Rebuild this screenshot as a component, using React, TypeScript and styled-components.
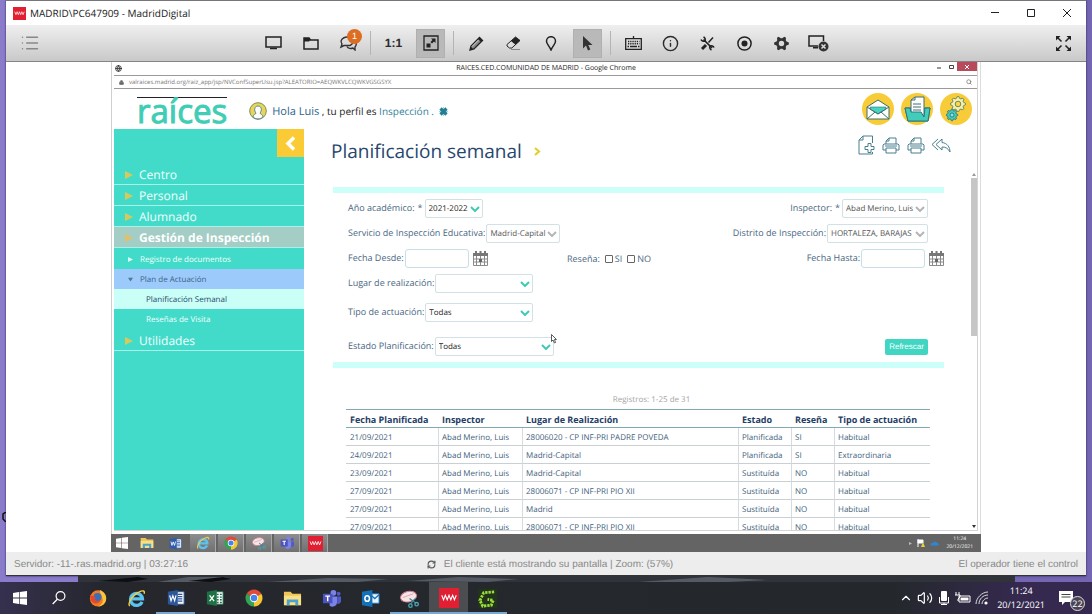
import React from "react";
import styled, { createGlobalStyle, css } from "styled-components";
import {
  Info, List, Lock, Globe, Search, RefreshCw, ChevronUp, Volume2,
} from "lucide-react";

const UI = `"Open Sans", "Noto Sans", sans-serif`;
const ARIAL = `"Liberation Sans", Arial, sans-serif`;

const Global = createGlobalStyle`
  * { box-sizing: border-box; }
  html, body, #root { height: 100%; }
  body { margin: 0; font-family: ${UI}; overflow: hidden; text-rendering: geometricPrecision; }
  button, select, input { text-rendering: inherit; }
  button { font-family: inherit; padding: 0; border: 0; background: none; color: inherit; }
  svg { display: block; flex: none; }
  a { color: inherit; text-decoration: none; }
`;

/* ---------- desktop ---------- */
const Desktop = styled.div`
  display: flex; flex-direction: column; height: 100%; position: relative;
  background: linear-gradient(90deg, #8a7ccb 0 78px, #3a3d43 78px calc(100% - 77px), #7566b3 calc(100% - 77px));
`;
const AppWindow = styled.div`
  flex: 1; min-height: 0; margin: 0 6px; display: flex; flex-direction: column;
  background: #fff; border-top: 1px solid #77747c; border-bottom: 1px solid #333;
  box-shadow: 0 0 2px #2a2150;
`;
const Wallpaper = styled.svg` width: calc(100% - 155px); height: 6px; margin-left: 78px; `;
const EdgeCursor = styled.svg` position: absolute; left: 2px; bottom: 92px; `;

const TitleBar = styled.header`
  display: flex; align-items: center; height: 24px; padding: 0 1px 0 7px;
  font-size: 10px; color: #222;
`;
const TitleText = styled.span` flex: 1; margin-left: 4px; line-height: 14px; padding-bottom: 1px; `;
const WinButton = styled.button`
  width: 36px; height: 24px; display: grid; place-items: center;
`;

const Toolbar = styled.div`
  display: grid; grid-template-columns: 1fr auto 1fr; align-items: center;
  height: 37px; padding: 0 14px; border-bottom: 1px solid #858585;
  background: linear-gradient(#efefef, #c9c9c9); color: #2b2b2b;
`;
const ToolGroup = styled.div` display: flex; align-items: center; gap: 8px; `;
const ToolButton = styled.button<{ $on?: boolean }>`
  position: relative; width: 29px; height: 29px; display: grid; place-items: center;
  font: bold 12px ${ARIAL};
  ${(p) => p.$on && css`background: #b9b9b9; box-shadow: inset 0 0 0 1px #b0b0b0;`}
`;
const ToolDivider = styled.span` width: 1px; height: 24px; background: #b4b4b4; `;
const ToolBadge = styled.span`
  position: absolute; right: 0; top: 0; width: 15px; height: 15px; border-radius: 50%;
  background: #dd6d22; color: #fff; font: 9px/15px ${ARIAL}; text-align: center;
`;
const PlainIcon = styled.button` width: 16px; height: 20px; display: grid; place-items: center; color: #888; `;
const EndIcon = styled(PlainIcon)` justify-self: end; color: #222; margin-right: 1px; `;

const StatusBar = styled.footer`
  display: grid; grid-template-columns: 1fr auto 1fr; align-items: center; height: 23px;
  padding: 1px 8px 0; background: #ededed; color: #888; font: 10px ${ARIAL};
`;
const StatusMid = styled.span` display: flex; align-items: center; gap: 8px; padding-left: 8px; `;
const StatusEnd = styled.span` text-align: right; `;

/* ---------- remote desktop ---------- */
const RemoteStage = styled.div` flex: 1; min-height: 0; display: flex; padding: 0 105px; `;
const Remote = styled.div`
  flex: 1; min-width: 0; display: flex; flex-direction: column; background: #fff;
  border-left: 1px solid #cfcfcf; border-right: 1px solid #dcdcdc;
`;
const Browser = styled.div`
  flex: 1; min-height: 0; display: flex; flex-direction: column; margin: 0 2px 3px;
  border: solid #d4d4d4; border-width: 0 1px 1px 0;
`;
const BrowserTitle = styled.div`
  display: grid; grid-template-columns: 1fr auto 1fr; height: 14px; padding-left: 1px;
  border-bottom: 1px solid #9a9a9a; font-size: 7px; line-height: 13px; color: #222;
`;
const BrowserIcon = styled.span` display: flex; align-items: center; height: 13px; color: #333; `;
const BrowserControls = styled.span` display: flex; justify-content: flex-end; `;
const MiniButton = styled.button<{ $close?: boolean }>`
  width: ${(p) => (p.$close ? 20 : 12)}px; height: 9px; display: grid; place-items: center;
  ${(p) => p.$close && css`background: #b94a5c;`}
`;
const AddressBar = styled.div`
  display: flex; align-items: center; gap: 5px; height: 13px; padding: 0 5px;
  border-bottom: 1px solid #9a9a9a; font-size: 6px; color: #777;
`;
const Url = styled.span` flex: 1; line-height: 10px; `;

const PageHeader = styled.div`
  display: flex; align-items: center; height: 40px; padding: 0 5px 0 23px;
`;
const Logo = styled.a`
  height: 25px; border-top: 1px solid #222;
  font: 33px/25px ${UI}; color: #41cdb5; -webkit-text-stroke: 1px #41cdb5;
`;
const UserInfo = styled.div`
  flex: 1; display: flex; align-items: center; gap: 5px; margin: 4px 0 0 22px;
  font-size: 10px; color: #222;
`;
const UserText = styled.span` white-space: pre; `;
const UserName = styled.a` font-size: 11px; color: #2a648e; `;
const Profile = styled.a` color: #2f7f9d; `;
const RoundNav = styled.nav` display: flex; gap: 7px; `;
const RoundButton = styled.button`
  width: 32px; height: 32px; border-radius: 50%; background: #f8cc38;
  display: grid; place-items: center;
`;

const Columns = styled.div` flex: 1; min-height: 0; display: flex; overflow: hidden; `;
const Sidebar = styled.nav` width: 190px; flex: none; background: #42dbc9; color: #f2fffd; `;
const SideTop = styled.div` height: 35px; display: flex; justify-content: flex-end; `;
const Collapse = styled.button`
  width: 27px; height: 28px; background: #fbcb35; display: grid; place-items: center;
`;
const MenuItem = styled.a<{ $active?: boolean }>`
  display: flex; align-items: center; gap: 6px; height: 21px; padding: 1px 0 0 11px;
  border-bottom: 1px solid #a6f3e9; font-size: 12px; line-height: 18px;
  ${(p) => p.$active && css`background: #a3cdc5; font-weight: bold; color: #fff;`}
`;
const SubMenu = styled.div` padding: 1px 0; `;
const SubItem = styled.a<{ $tone?: "open" | "current"; $deep?: boolean }>`
  display: flex; align-items: center; gap: 7px; height: 20px; font-size: 8px;
  padding-left: ${(p) => (p.$deep ? 32 : 14)}px;
  ${(p) => p.$tone === "open" && css`background: #9ccbfb; color: #3c6288;`}
  ${(p) => p.$tone === "current" && css`background: #cafff8; color: #1f4a66;`}
`;

const Main = styled.main` flex: 1; min-width: 0; display: flex; flex-direction: column; `;
const Heading = styled.div`
  display: flex; align-items: center; height: 42px; padding: 0 26px 0 27px;
`;
const PageTitle = styled.h1`
  flex: 1; display: flex; align-items: center; gap: 12px; margin: 2px 0 0;
  font-size: 19px; line-height: 24px; font-weight: 400; color: #27466d;
`;
const Actions = styled.div` display: flex; gap: 5px; margin-top: -10px; color: #4a7f90; `;
const ActionButton = styled.button` width: 20px; height: 22px; display: grid; place-items: center; `;
const ScrollArea = styled.div` flex: 1; min-height: 0; display: flex; `;
const Content = styled.div` flex: 1; min-width: 0; overflow: hidden; padding: 16px 26px 0 29px; `;
const Scrollbar = styled.div`
  width: 7px; display: flex; flex-direction: column; align-items: center; justify-content: space-between;
  padding: 2px 0;
`;
const Thumb = styled.span` width: 6px; height: 158px; margin: 2px 0 auto; background: #c6c6c6; `;

const Filters = styled.form`
  position: relative; border: solid #cdfffa; border-width: 6px 0; padding: 3px 0 4px 15px; height: 181px;
  color: #4a6883; font-size: 9px;
`;
const FilterRow = styled.div<{ $h: number; $flush?: boolean }>`
  display: grid; grid-template-columns: 219px 1fr auto; align-items: center;
  height: ${(p) => p.$h}px; padding-right: ${(p) => (p.$flush ? 0 : 16)}px;
`;
const Field = styled.div` display: flex; align-items: center; gap: 1px; white-space: nowrap; `;
const Label = styled.label<{ $req?: boolean }>`
  padding-bottom: 2px;
  ${(p) => p.$req && css`&::after { content: "*"; margin: 0 1px 0 3px; }`}
`;
const SelectBox = styled.span<{ $w: number; $muted?: boolean }>`
  position: relative; display: block; width: ${(p) => p.$w}px; height: 19px;
  color: ${(p) => (p.$muted ? "#b5b5b5" : "#3fcab4")};
  select {
    appearance: none; width: 100%; height: 100%; padding: 0 3px; border: 1px solid #d2e2e4;
    border-radius: 2px; background: #fff; font: 8px ${UI};
    color: ${(p) => (p.$muted ? "#555" : "#222")};
  }
  svg { position: absolute; right: 3px; top: 7px; pointer-events: none; }
`;
const DateInput = styled.input`
  width: 64px; height: 19px; margin-right: 3px; border: 1px solid #c5e0e6; border-radius: 3px;
  background: #fff; font: 8px ${UI};
`;
const Check = styled.input`
  appearance: none; width: 8px; height: 8px; margin: 0 1px 0 4px; border: 1px solid #666; border-radius: 1px; background: #fff;
`;
const Refresh = styled.button`
  width: 43px; height: 16px; border-radius: 2px; background: #40d6c2; color: #fff; font: 8px ${ARIAL};
`;
const MouseCursor = styled.svg` position: absolute; left: 218px; top: 141px; `;

const Results = styled.section` padding: 26px 14px 0 13px; `;
const Count = styled.p` margin: 0 0 3px; padding-left: 27px; font-size: 8px; line-height: 12px; text-align: center; color: #a5a5a5; `;
const Table = styled.table`
  width: 100%; table-layout: fixed; border-collapse: separate; border-spacing: 0; text-align: left;
  font-size: 8px; line-height: 14px; color: #3f5f7c; white-space: nowrap;
  th, td { padding: 2px 0 0 4px; }
  th { height: 19px; border: solid #82a9b0; border-width: 1px 0; color: #1f3d66; font-size: 9px; }
  td { height: 18px; border-bottom: 1px solid #c8d0d4; }
  td + td { border-left: 1px solid #d5dcdf; padding-left: 3px; }
`;
const Col = styled.col<{ $w?: number }>` width: ${(p) => (p.$w ? p.$w + "px" : "auto")}; `;

const RemoteTaskbar = styled.div`
  display: flex; align-items: center; gap: 2px; height: 18px; background: #646464; color: #fff; margin: 0 -1px;
`;
const RemoteTask = styled.button<{ $open?: boolean }>`
  width: 26px; height: 18px; display: grid; place-items: center;
  &:first-child { width: 21px; }
  ${(p) => p.$open && css`background: linear-gradient(#8d8d8d, #707070); box-shadow: inset -1px 0 #a5a5a5;`}
`;
const RemoteTray = styled.div` flex: 1; display: flex; justify-content: flex-end; align-items: center; gap: 5px; padding-right: 8px; `;
const RemoteClock = styled.time` margin-left: 2px; font-size: 5px; line-height: 8px; text-align: center; `;

/* ---------- host taskbar ---------- */
const Taskbar = styled.nav`
  display: flex; align-items: stretch; height: 32px; color: #fff;
  background: linear-gradient(90deg, #36304f 0, #25272d 100px, #24282c calc(100% - 200px), #35294f calc(100% - 70px), #36294f);
`;
const TaskButton = styled.button<{ $state?: "open" | "active" }>`
  width: 39px; height: 32px; display: grid; place-items: center;
  border: solid transparent; border-width: 2px 0;
  ${(p) => p.$state && css`border-bottom-color: #76a9d4;`}
  ${(p) => p.$state === "active" && css`background: #4b4d51;`}
`;
const Tray = styled.div` flex: 1; display: flex; justify-content: flex-end; align-items: center; gap: 4px; `;
const Clock = styled.time` margin: 0 9px 0 3px; font-size: 9px; line-height: 14px; text-align: center; `;
const Notice = styled.button` position: relative; width: 24px; height: 24px; margin-right: 10px; `;
const NoticeCount = styled.span`
  position: absolute; right: -3px; bottom: -1px; width: 15px; height: 15px; border-radius: 50%;
  border: 1px solid #ddd; background: #4a4455; font-size: 9px; line-height: 13px; text-align: center;
`;

/* ---------- drawings ---------- */
const S = ({ w, h = w, vb, children }: { w: number; h?: number; vb: string; children: React.ReactNode }) => (
  <svg width={w} height={h} viewBox={vb} aria-hidden="true" fill="none" stroke="none">{children}</svg>
);
const MadridLogo = ({ s }: { s: number }) => (
  <S w={s} vb="0 0 22 22">
    <rect width="22" height="22" fill="#e01f33" />
    <path d="M3 8l2 5 2-5 2 5 2-5 2 5 2-5 2 5 2-5" stroke="#fff" strokeWidth="1.2" />
  </S>
);
const WindowsIcon = ({ s }: { s: number }) => (
  <S w={s} vb="0 0 14 14"><path fill="#fff" d="M0 2l6-.9V6.600H0zM6.700 1L14 0v6.600H6.700zM0 7.400h6v5.500L0 12zM6.700 7.400H14V14l-7.300-1z" /></S>
);
const OfficeIcon = ({ s, c, k }: { s: number; c: string; k: "word" | "excel" }) => (
  <S w={s} vb="0 0 20 20">
    <path d="M10 3h9v14h-9z" fill="#f4f6fa" stroke={c} />
    {k === "word" ? <path d="M12 6h5M12 8.500h5M12 11h5M12 13.500h5" stroke={c} strokeWidth="1.200" />
      : <path d="M12 6h2M15.500 6h2M12 9h2M15.500 9h2M12 12h2M15.500 12h2M12 15h2M15.500 15h2" stroke={c} strokeWidth="1.600" />}
    <path d="M1 3l11-2v18L1 17z" fill={c} />
    {k === "word" ? <path d="M3 7l1.500 6L6.500 7.500 8.500 13 10 7" stroke="#fff" strokeWidth="1.300" />
      : <path d="M4 7l5 6.500M9 7l-5 6.500" stroke="#fff" strokeWidth="1.500" />}
  </S>
);
const IeIcon = ({ s }: { s: number }) => (
  <S w={s} vb="0 0 20 20">
    <path d="M15.800 13.500A6.300 6.300 0 1 1 16.300 10.500H5" stroke="#5cc3ee" strokeWidth="3.400" />
    <path d="M3 18C0 15 6 6 13 3c4-2 6-1 5 2" stroke="#f2cf45" strokeWidth="1.500" />
  </S>
);
const ChromeIcon = ({ s }: { s: number }) => (
  <S w={s} vb="0 0 20 20">
    <path d="M10 10L1.800 5.300A9.500 9.500 0 0 1 18.200 5.300z" fill="#e04a3a" />
    <path d="M10 10L18.200 5.300A9.500 9.500 0 0 1 10 19.500z" fill="#f6c733" />
    <path d="M10 10v9.500A9.500 9.500 0 0 1 1.800 5.300z" fill="#35a354" />
    <circle cx="10" cy="10" r="4.600" fill="#fff" /><circle cx="10" cy="10" r="3.600" fill="#4384ee" />
  </S>
);
const FirefoxIcon = () => (
  <S w={18} vb="0 0 20 20">
    <circle cx="10" cy="10.500" r="9" fill="#f37a24" />
    <path d="M12 1c5 2 8 6 7 11-1 5-5 7.500-9 7.500 4-2 6-5 5-9-.500-3-3-5-3-9.500z" fill="#fbc33c" />
    <circle cx="9.500" cy="9" r="4.500" fill="#3a6fb5" />
    <path d="M1 6c1 2 4 1 6 3 1 1 0 2-1 3 2 2 5 2 7 0-1 5-9 6-11 0z" fill="#e3472d" />
  </S>
);
const ExplorerIcon = ({ s }: { s: number }) => (
  <S w={s} vb="0 0 20 20">
    <path d="M1 3h7l2 2h9v12H1z" fill="#eec556" /><path d="M1 7h18v10H1z" fill="#f9df86" />
    <path d="M4 17v-6h12v6h-3v-3H7v3z" fill="#4aa3cf" />
  </S>
);
const TeamsIcon = ({ s }: { s: number }) => (
  <S w={s} vb="0 0 20 20">
    <circle cx="12" cy="4" r="3" fill="#7b83eb" /><circle cx="17.500" cy="5" r="2" fill="#5059c9" />
    <path d="M8 8h8v6a5 5 0 0 1-8 3.500z" fill="#7b83eb" /><path d="M16 8h4v5a3 3 0 0 1-4 2.500z" fill="#5059c9" />
    <path d="M1 5h10v10H1z" fill="#4b53bc" /><path d="M3.500 7.500h5M6 7.500v5.500" stroke="#fff" strokeWidth="1.500" />
  </S>
);
const OutlookIcon = () => (
  <S w={19} vb="0 0 20 20">
    <path d="M10 5h9v10h-9z" fill="#e9f3fb" stroke="#1473c0" /><path d="M10 6l4.500 4L19 6" stroke="#1473c0" strokeWidth="1.400" />
    <path d="M1 3l11-2v18L1 17z" fill="#1470b8" /><ellipse cx="6.500" cy="10" rx="2.400" ry="3" stroke="#fff" strokeWidth="1.600" />
  </S>
);
const SnipIcon = ({ s }: { s: number }) => (
  <S w={s} vb="0 0 20 20">
    <ellipse cx="9" cy="8" rx="8.500" ry="5.500" fill="#f6e3e6" stroke="#c9808c" transform="rotate(-12 9 8)" />
    <path d="M3 9l11-4" stroke="#dba4ae" /><path d="M10 10l7 5M16 10l-5 6" stroke="#3c8592" strokeWidth="1.200" />
    <circle cx="17.500" cy="16" r="1.800" stroke="#4aa6b5" strokeWidth="1.400" /><circle cx="11" cy="17.500" r="1.800" stroke="#4aa6b5" strokeWidth="1.400" />
  </S>
);
const CamtasiaIcon = () => (
  <S w={19} vb="0 0 20 20">
    <rect width="20" height="20" fill="#23341d" />
    <path d="M17 3L6 4 2 12l3 6 9-1 2-5-6-1" stroke="#9be03a" strokeWidth="3" strokeDasharray="2.500 1" />
  </S>
);
const Down = () => <S w={10} h={6} vb="0 0 10 6"><path d="M1 1l4 4 4-4" stroke="currentColor" strokeWidth="2" /></S>;
const Calendar = () => (
  <S w={15} h={15} vb="0 0 15 15">
    <path d="M0 2h15v3H0zM2 0h2v3H2zM6.500 0h2v3h-2zM11 0h2v3h-2z" fill="#777" />
    <path d="M.500 5v9.500h14V5M0 8h15M0 11h15M3.500 5v10M7.500 5v10M11.500 5v10" stroke="#8a8a8a" />
    <path d="M6 8h3v3H6z" fill="#666" />
  </S>
);
const Printer = () => (
  <S w={18} h={17} vb="0 0 18 17">
    <path d="M4 7V4l3-3h7v6M7 1v3H4M4 13H1V8l1-1h14l1 1v5h-3M4 11h10v5H4zM3 9h12" stroke="currentColor" />
  </S>
);
const Triangle = ({ s, c, down }: { s: number; c: string; down?: boolean }) => (
  <S w={s} vb="0 0 8 8"><path d={down ? "M0 1h8L4 7z" : "M0 0l8 4-8 4z"} fill={c} /></S>
);
const gearPath = (teeth: number, ro: number, ri: number, c: number) =>
  Array.from({ length: teeth * 4 }, (_, i) => {
    const a = ((i - 0.5) / (teeth * 4)) * Math.PI * 2;
    const r = i % 4 < 2 ? ro : ri;
    return `${i ? "L" : "M"}${(c + r * Math.cos(a)).toFixed(2)} ${(c + r * Math.sin(a)).toFixed(2)}`;
  }).join("") + "Z";

/* ---------- data ---------- */
const rows = [
  ["21/09/2021", "Abad Merino, Luis", "28006020 - CP INF-PRI PADRE POVEDA", "Planificada", "SI", "Habitual"],
  ["24/09/2021", "Abad Merino, Luis", "Madrid-Capital", "Planificada", "SI", "Extraordinaria"],
  ["23/09/2021", "Abad Merino, Luis", "Madrid-Capital", "Sustituída", "NO", "Habitual"],
  ["27/09/2021", "Abad Merino, Luis", "28006071 - CP INF-PRI PIO XII", "Sustituída", "NO", "Habitual"],
  ["27/09/2021", "Abad Merino, Luis", "Madrid", "Sustituída", "NO", "Habitual"],
  ["27/09/2021", "Abad Merino, Luis", "28006071 - CP INF-PRI PIO XII", "Sustituída", "NO", "Habitual"],
];
const heads = ["Fecha Planificada", "Inspector", "Lugar de Realización", "Estado", "Reseña", "Tipo de actuación"];

const Select = ({ id, label, value, w, muted, req }: { id: string; label: string; value: string; w: number; muted?: boolean; req?: boolean }) => (
  <Field>
    <Label htmlFor={id} $req={req}>{label}</Label>
    <SelectBox $w={w} $muted={muted}>
      <select id={id}><option>{value}</option></select>
      <Down />
    </SelectBox>
  </Field>
);

export default function App() {
  return (
    <Desktop>
      <Global />
      <AppWindow>
        <TitleBar>
          <MadridLogo s={13} />
          <TitleText>MADRID\PC647909 - MadridDigital</TitleText>
          <WinButton aria-label="Minimizar"><S w={8} vb="0 0 8 8"><path d="M0 3.500h8" stroke="#222" /></S></WinButton>
          <WinButton aria-label="Maximizar"><S w={8} vb="0 0 8 8"><path d="M.500.500h7v7h-7z" stroke="#222" /></S></WinButton>
          <WinButton aria-label="Cerrar"><S w={8} vb="0 0 8 8"><path d="M0 0l8 8M8 0L0 8" stroke="#222" /></S></WinButton>
        </TitleBar>
        <Toolbar>
          <PlainIcon aria-label="Lista"><List size={20} strokeWidth={1.8} /></PlainIcon>
          <ToolGroup>
            <ToolButton aria-label="Pantalla"><S w={17} h={14} vb="0 0 17 14"><path d="M1 1h15v10H1z" stroke="#222" strokeWidth="1.500" /><path d="M5 12.500h7" stroke="#222" strokeWidth="1.500" /></S></ToolButton>
            <ToolButton aria-label="Archivos"><S w={16} h={13} vb="0 0 16 13"><path d="M1 12V1h5l1.500 2H15v9z" stroke="#222" strokeWidth="1.500" /><path d="M1 1h5l1.500 2L6 4.500H1z" fill="#222" /></S></ToolButton>
            <ToolButton aria-label="Chat"><S w={18} h={16} vb="0 0 18 16"><path d="M11 10.500A6 4.500 0 1 0 3 9l-1 3 3-1.500z" stroke="#333" strokeWidth="1.400" /><path d="M8 11.500c1 2 4 2.500 6 1.500l2 2v-3c2-2 1.500-5-.500-6" stroke="#333" strokeWidth="1.400" /></S><ToolBadge>1</ToolBadge></ToolButton>
            <ToolDivider />
            <ToolButton>1:1</ToolButton>
            <ToolButton $on aria-label="Ajustar"><S w={16} vb="0 0 16 16"><path d="M1 1h14v14H1z" stroke="#222" strokeWidth="1.300" /><path d="M8 3.500h4.500V8L11 6.500 9 8.500 7.500 7l2-2zM3.500 8.500h4v4h-4z" fill="#222" /></S></ToolButton>
            <ToolDivider />
            <ToolButton aria-label="Lápiz"><S w={15} vb="0 0 15 15"><path d="M1 14l1-4 8.500-8.500 3 3L5 13z" stroke="#222" strokeWidth="1.300" fill="#888" /><path d="M3 10.500l7-7" stroke="#ddd" /><path d="M1 14l1-3 2 2zM10.500 1.500l3 3-1.500 1.500-3-3z" fill="#222" /></S></ToolButton>
            <ToolButton aria-label="Borrador"><S w={15} h={14} vb="0 0 15 14"><path d="M1 8.500L9.500 1 14 4.500 5.800 12H3.500L1 10z" fill="#ddd" stroke="#222" /><path d="M5 5l4.500-4L14 4.500 9.500 8.700z" fill="#222" /><path d="M5 13.500h9" stroke="#888" /></S></ToolButton>
            <ToolButton aria-label="Marcador"><S w={12} h={15} vb="0 0 12 15"><path d="M6 14C4.500 10 1.500 8 1.500 5.200a4.500 4.500 0 0 1 9 0C10.500 8 7.500 10 6 14z" stroke="#222" strokeWidth="1.500" /></S></ToolButton>
            <ToolButton $on aria-label="Puntero"><S w={11} h={15} vb="0 0 11 15"><path d="M1 0v12.500l3-3 2 5 2.300-1-2-4.500H10.500z" fill="#333" /></S></ToolButton>
            <ToolDivider />
            <ToolButton aria-label="Teclado"><S w={17} h={14} vb="0 0 17 14"><path d="M.700 2.700h15.600v10.600H.700zM8.500 0v3" stroke="#222" strokeWidth="1.300" /><path d="M3 5.500h11.500M3 7.800h11.500" stroke="#222" strokeWidth="1.400" strokeDasharray="1.300 .900" /><path d="M2.500 10.500H4M5 10.500h7M13 10.500h1.500" stroke="#222" strokeWidth="1.400" /></S></ToolButton>
            <ToolButton aria-label="Información"><Info size={17} /></ToolButton>
            <ToolButton aria-label="Herramientas"><S w={15} vb="0 0 15 15"><path d="M3.500 3.500l8.500 8.500" stroke="#222" strokeWidth="1.700" /><path d="M1 3.500a3 3 0 0 0 4 1.500 3 3 0 0 0-1.500-4M11.500 14A3 3 0 0 1 10 10a3 3 0 0 1 4 1.500" stroke="#222" strokeWidth="1.600" /><path d="M13 1.500L8.500 6.500" stroke="#222" strokeWidth="1.500" /><path d="M6 9l-4 4" stroke="#222" strokeWidth="3" /></S></ToolButton>
            <ToolButton aria-label="Grabar"><S w={15} vb="0 0 15 15"><circle cx="7.500" cy="7.500" r="6.600" stroke="#222" strokeWidth="1.500" /><circle cx="7.500" cy="7.500" r="3" fill="#222" /></S></ToolButton>
            <ToolButton aria-label="Ajustes"><S w={15} vb="0 0 15 15"><path fillRule="evenodd" fill="#333" d={gearPath(6, 7.4, 5.4, 7.5) + "M10.200 7.500a2.700 2.700 0 1 0-5.400 0 2.700 2.700 0 1 0 5.400 0z"} /></S></ToolButton>
            <ToolButton aria-label="Desconectar"><S w={21} h={17} vb="0 0 21 17"><path d="M10 11H1V1h14.500v5M5 12.700h5" stroke="#222" strokeWidth="1.500" /><circle cx="15.500" cy="11.500" r="5" fill="#333" /><path d="M13.500 9.500l4 4M17.500 9.500l-4 4" stroke="#ddd" strokeWidth="1.500" /></S></ToolButton>
          </ToolGroup>
          <EndIcon aria-label="Pantalla completa"><S w={15} vb="0 0 15 15"><path d="M0 0h4.500L0 4.500zM15 0h-4.500L15 4.500zM0 15h4.500L0 10.500zM15 15h-4.500L15 10.500z" fill="#222" /><path d="M1.500 1.500L5.500 5.500M13.500 1.500l-4 4M1.500 13.500l4-4M13.500 13.500l-4-4" stroke="#222" strokeWidth="1.600" /></S></EndIcon>
        </Toolbar>

        <RemoteStage>
          <Remote>
            <Browser>
              <BrowserTitle>
                <BrowserIcon><Globe size={7} strokeWidth={3} /></BrowserIcon>
                <span>RAICES.CED.COMUNIDAD DE MADRID - Google Chrome</span>
                <BrowserControls>
                  <MiniButton aria-label="Minimizar"><S w={4} vb="0 0 4 4"><path d="M0 3h4" stroke="#333" /></S></MiniButton>
                  <MiniButton aria-label="Maximizar"><S w={5} h={4} vb="0 0 5 4"><path d="M.500.500h4v3h-4z" stroke="#444" /></S></MiniButton>
                  <MiniButton $close aria-label="Cerrar"><S w={4} vb="0 0 4 4"><path d="M0 0l4 4M4 0L0 4" stroke="#fff" /></S></MiniButton>
                </BrowserControls>
              </BrowserTitle>
              <AddressBar>
                <Lock size={5} strokeWidth={4} fill="#666" />
                <Url>valraices.madrid.org/raiz_app/jsp/NVConfSuperUsu.jsp?ALEATORIO=AEQWKVLCQWKVGSGSYX</Url>
                <Search size={6} strokeWidth={3} />
              </AddressBar>
              <PageHeader>
                <Logo href="#">raíces</Logo>
                <UserInfo>
                  <S w={18} vb="0 0 18 18">
                    <circle cx="9" cy="9" r="8.300" fill="#e8d65a" stroke="#7c8f56" />
                    <path d="M4 15c0-3 3-2.500 3-4-2-2-2-7 2-7s4 5 2 7c0 1.500 3 1 3 4-3 2.500-7 2.500-10 0z" fill="#fff" stroke="#4f7f8f" strokeWidth=".900" />
                  </S>
                  <UserText><UserName href="#">Hola Luis</UserName> , tu perfil es <Profile href="#">Inspección .</Profile></UserText>
                  <S w={9} vb="0 0 9 9"><path d="M1.500 1.500l6 6M7.500 1.500l-6 6" stroke="#237f95" strokeWidth="3.200" /><path d="M4.500 0v2M4.500 7v2M0 4.500h2M7 4.500h2" stroke="#8cc9cf" strokeWidth=".800" /></S>
                </UserInfo>
                <RoundNav>
                  <RoundButton aria-label="Mensajes">
                    <S w={24} h={21} vb="0 0 24 21">
                      <path d="M1 8L12 1l11 7v12H1z" fill="#fff" stroke="#3c6f70" />
                      <path d="M4 8h16v2l-8 5-8-5z" fill="#46d3bf" stroke="#3c6f70" strokeWidth=".600" />
                      <path d="M1 8l8.500 5.500M23 8l-8.500 5.500M1 20l8-7 3 2 3-2 8 7" stroke="#3c6f70" />
                    </S>
                  </RoundButton>
                  <RoundButton aria-label="Documentos">
                    <S w={27} h={26} vb="0 0 27 26">
                      <path d="M1 12h7v3h10v-3h8l-2 13H4z" fill="#42cdbb" stroke="#2d7480" />
                      <path d="M7 4l4-3h9v20l-3-4H7z" fill="#fff" stroke="#3c6f70" /><path d="M11 1v3H7M9 8h8M9 11h8M9 14h8" stroke="#3c6f70" />
                      <path d="M1 12h5l1 4h10l3 5 1-9h5l-2 13H4z" fill="#42cdbb" stroke="#2d7480" />
                    </S>
                  </RoundButton>
                  <RoundButton aria-label="Configuración">
                    <S w={20} h={26} vb="0 0 20 26">
                      <g transform="translate(4 0)"><path d={gearPath(8, 7.5, 5.8, 8)} fill="#f7efb0" stroke="#5b7f55" strokeWidth=".900" /><circle cx="8" cy="8" r="2.800" fill="#fbd54a" stroke="#5b7f55" strokeWidth=".900" /></g>
                      <g transform="translate(0 13)"><path d={gearPath(8, 5.8, 4.4, 6)} fill="#42cdbb" stroke="#2d7480" strokeWidth=".900" /><circle cx="6" cy="6" r="2" fill="#8de4d8" stroke="#2d7480" strokeWidth=".900" /></g>
                    </S>
                  </RoundButton>
                </RoundNav>
              </PageHeader>
              <Columns>
                <Sidebar>
                  <SideTop><Collapse aria-label="Contraer menú"><S w={11} h={15} vb="0 0 11 15"><path d="M9 1.500L3 7.500l6 6" stroke="#fff" strokeWidth="3.500" /></S></Collapse></SideTop>
                  <MenuItem href="#"><Triangle s={8} c="#d9c95c" />Centro</MenuItem>
                  <MenuItem href="#"><Triangle s={8} c="#d9c95c" />Personal</MenuItem>
                  <MenuItem href="#"><Triangle s={8} c="#d9c95c" />Alumnado</MenuItem>
                  <MenuItem href="#" $active><Triangle s={8} c="#e0c068" />Gestión de Inspección</MenuItem>
                  <SubMenu>
                    <SubItem href="#"><Triangle s={5} c="#d8fff8" />Registro de documentos</SubItem>
                    <SubItem href="#" $tone="open"><Triangle s={5} c="#4c7899" down />Plan de Actuación</SubItem>
                    <SubItem href="#" $tone="current" $deep>Planificación Semanal</SubItem>
                    <SubItem href="#" $deep>Reseñas de Visita</SubItem>
                  </SubMenu>
                  <MenuItem href="#"><Triangle s={8} c="#d9c95c" />Utilidades</MenuItem>
                </Sidebar>
                <Main>
                  <Heading>
                    <PageTitle>Planificación semanal <S w={7} h={9} vb="0 0 7 9"><path d="M1 1l4 3.500L1 8" stroke="#e2cf2b" strokeWidth="2.200" /></S></PageTitle>
                    <Actions>
                      <ActionButton aria-label="Nuevo"><S w={17} h={20} vb="0 0 17 20"><path d="M14.500 8V1H5L1 5v14h13.500v-2M5 1v4H1" stroke="currentColor" /><path d="M10 8.500h3v3h3v3h-3v3h-3v-3H7v-3h3z" fill="#fff" stroke="currentColor" /></S></ActionButton>
                      <ActionButton aria-label="Imprimir"><Printer /></ActionButton>
                      <ActionButton aria-label="Imprimir listado"><Printer /></ActionButton>
                      <ActionButton aria-label="Volver"><S w={20} h={15} vb="0 0 20 15"><path d="M7 1L1 6.500 7 12M11 1L5 6.500l6 5.500V9c4 0 6 1.500 8 5 0-5-3-9-8-9.500z" stroke="currentColor" /></S></ActionButton>
                    </Actions>
                  </Heading>
                  <ScrollArea>
                    <Content>
                      <Filters>
                        <FilterRow $h={25}>
                          <Select id="anio" label="Año académico:" value="2021-2022" w={58} req />
                          <span />
                          <Select id="inspector" label="Inspector:" value="Abad Merino, Luis" w={86} muted req />
                        </FilterRow>
                        <FilterRow $h={25}>
                          <Select id="servicio" label="Servicio de Inspección Educativa:" value="Madrid-Capital" w={74} muted />
                          <span />
                          <Select id="distrito" label="Distrito de Inspección:" value="HORTALEZA, BARAJAS" w={101} muted />
                        </FilterRow>
                        <FilterRow $h={25} $flush>
                          <Field><Label htmlFor="desde">Fecha Desde:</Label><DateInput id="desde" /><Calendar /></Field>
                          <Field><span>Reseña:</span><Check type="checkbox" id="si" /><label htmlFor="si">SI</label><Check type="checkbox" id="no" /><label htmlFor="no">NO</label></Field>
                          <Field><Label htmlFor="hasta">Fecha Hasta:</Label><DateInput id="hasta" /><Calendar /></Field>
                        </FilterRow>
                        <FilterRow $h={25}><Select id="lugar" label="Lugar de realización:" value="" w={98} /></FilterRow>
                        <FilterRow $h={32}><Select id="tipo" label="Tipo de actuación:" value="Todas" w={108} /></FilterRow>
                        <FilterRow $h={37}>
                          <Select id="estado" label="Estado Planificación:" value="Todas" w={119} />
                          <span />
                          <Refresh type="button">Refrescar</Refresh>
                        </FilterRow>
                        <MouseCursor width="6" height="10" viewBox="0 0 6 10"><path d="M.500.500v7l1.500-1.500 1.500 3 1-.500-1-3h2z" fill="#fff" stroke="#333" strokeWidth=".800" /></MouseCursor>
                      </Filters>
                      <Results>
                        <Count>Registros: 1-25 de 31</Count>
                        <Table>
                          <colgroup><Col $w={92} /><Col $w={84} /><Col /><Col $w={53} /><Col $w={43} /><Col $w={96} /></colgroup>
                          <thead><tr>{heads.map((h) => <th key={h}>{h}</th>)}</tr></thead>
                          <tbody>{rows.map((r, i) => <tr key={i}>{r.map((c, j) => <td key={j}>{c}</td>)}</tr>)}</tbody>
                        </Table>
                      </Results>
                    </Content>
                    <Scrollbar>
                      <S w={4} h={3} vb="0 0 4 3"><path d="M0 3l2-3 2 3z" fill="#999" /></S>
                      <Thumb />
                      <S w={4} h={3} vb="0 0 4 3"><path d="M0 0l2 3 2-3z" fill="#333" /></S>
                    </Scrollbar>
                  </ScrollArea>
                </Main>
              </Columns>
            </Browser>
            <RemoteTaskbar>
              <RemoteTask aria-label="Inicio"><WindowsIcon s={12} /></RemoteTask>
              <RemoteTask aria-label="Explorador"><ExplorerIcon s={14} /></RemoteTask>
              <RemoteTask aria-label="Word"><OfficeIcon s={13} c="#2f5cab" k="word" /></RemoteTask>
              <RemoteTask $open aria-label="Internet Explorer"><IeIcon s={14} /></RemoteTask>
              <RemoteTask $open aria-label="Chrome"><ChromeIcon s={14} /></RemoteTask>
              <RemoteTask $open aria-label="Recortes"><SnipIcon s={14} /></RemoteTask>
              <RemoteTask $open aria-label="Teams"><TeamsIcon s={14} /></RemoteTask>
              <RemoteTask $open aria-label="Madrid Digital"><MadridLogo s={15} /></RemoteTask>
              <RemoteTray>
                <Triangle s={3} c="#bbb" />
                <S w={8} vb="0 0 8 8"><path d="M1 0v8M1 1h5v3H1z" stroke="#fff" fill="#fff" /><path d="M6 3l2 5H4z" fill="#e2d33a" /></S>
                <S w={9} h={5} vb="0 0 9 5"><path d="M1 4.500C-.500 3 1.500 1.500 3 2c1-2 4-1.500 4 0 2 0 2 2 1 2.500z" fill="#2d87d6" /></S>
                <RemoteClock>11:24<br />20/12/2021</RemoteClock>
              </RemoteTray>
            </RemoteTaskbar>
          </Remote>
        </RemoteStage>
        <StatusBar>
          <span>Servidor: -11-.ras.madrid.org | 03:27:16</span>
          <StatusMid><RefreshCw size={9} strokeWidth={3} color="#555" />El cliente está mostrando su pantalla | Zoom: (57%)</StatusMid>
          <StatusEnd>El operador tiene el control</StatusEnd>
        </StatusBar>
      </AppWindow>
      <Wallpaper viewBox="0 0 937 6" preserveAspectRatio="none" aria-hidden="true">
        <path d="M0 0h937v6H0z" fill="#30343a" />
        <path d="M80 6l30-5h40l-30 5zM190 6l60-4 60 1-30 3zM330 5l50-4 60 2-30 3zM560 6l70-5 60 3-40 2z" fill="#555b64" />
        <path d="M20 5l40-4 10 2-20 3zM110 5l35-4 8 2-20 3z" fill="#0d0f12" />
      </Wallpaper>
      <Taskbar>
        <TaskButton aria-label="Inicio"><WindowsIcon s={14} /></TaskButton>
        <TaskButton aria-label="Buscar"><S w={14} vb="0 0 14 14"><circle cx="8.500" cy="5" r="4.400" stroke="#fff" strokeWidth="1.200" /><path d="M5.300 8.300L.700 13" stroke="#fff" strokeWidth="1.300" /></S></TaskButton>
        <TaskButton aria-label="Firefox"><FirefoxIcon /></TaskButton>
        <TaskButton aria-label="Internet Explorer"><IeIcon s={19} /></TaskButton>
        <TaskButton $state="open" aria-label="Word"><OfficeIcon s={18} c="#2b579a" k="word" /></TaskButton>
        <TaskButton aria-label="Excel"><OfficeIcon s={18} c="#1e7145" k="excel" /></TaskButton>
        <TaskButton aria-label="Chrome"><ChromeIcon s={18} /></TaskButton>
        <TaskButton aria-label="Explorador"><ExplorerIcon s={19} /></TaskButton>
        <TaskButton aria-label="Teams"><TeamsIcon s={19} /></TaskButton>
        <TaskButton aria-label="Outlook"><OutlookIcon /></TaskButton>
        <TaskButton $state="open" aria-label="Recortes"><SnipIcon s={19} /></TaskButton>
        <TaskButton $state="active" aria-label="Madrid Digital"><MadridLogo s={20} /></TaskButton>
        <TaskButton $state="open" aria-label="Camtasia"><CamtasiaIcon /></TaskButton>
        <Tray>
          <ChevronUp size={14} strokeWidth={2} />
          <Volume2 size={16} strokeWidth={1.8} />
          <S w={14} h={14} vb="0 0 14 14"><rect x="4" width="6" height="10" rx="1" fill="#fff" /><path d="M2.500 6v6h9V6M7 12v2M4 13.500h6" stroke="#fff" /></S>
          <S w={16} h={12} vb="0 0 16 12"><path d="M4 4h11v6H4z" stroke="#fff" /><path d="M5.500 5.500h8v3h-8z" fill="#fff" /><path d="M1 0v3M4 0v3M0 3h5v2L3 7v2" stroke="#fff" /></S>
          <S w={15} h={14} vb="0 0 15 14"><path d="M1 13C1 7 7 1 13 1M4 13c0-5 4-9 9-9M7 13c0-3 3-6 6-6" stroke="#ddd" /><circle cx="11" cy="12" r="1.600" fill="#fff" /></S>
          <Clock>11:24<br />20/12/2021</Clock>
          <Notice aria-label="Notificaciones"><S w={16} h={16} vb="0 0 16 16"><path d="M1 1h14v11H7l-3 3v-3H1z" fill="#fff" /><path d="M3.500 4.500h9M3.500 7h9" stroke="#444" /></S><NoticeCount>22</NoticeCount></Notice>
        </Tray>
      </Taskbar>
      <EdgeCursor width="4" height="10" viewBox="0 0 4 10" aria-hidden="true"><path d="M4 0L1 2v5l3 3" fill="none" stroke="#111" strokeWidth="1.500" /></EdgeCursor>
    </Desktop>
  );
}
